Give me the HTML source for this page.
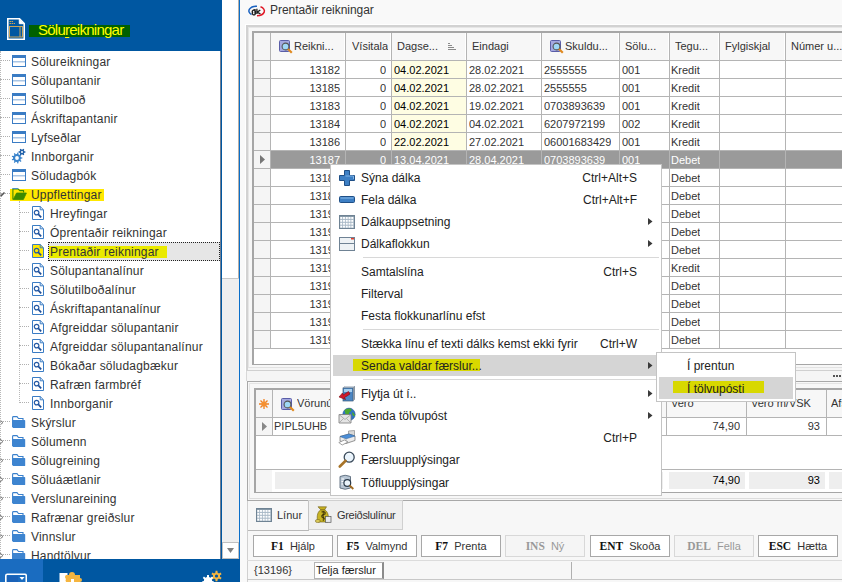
<!DOCTYPE html><html><head><meta charset="utf-8"><style>
*{margin:0;padding:0;box-sizing:border-box}
html,body{width:842px;height:582px;overflow:hidden;background:#f9f9f9;font-family:"Liberation Sans",sans-serif}
body{position:relative}
.a{position:absolute}
.t{position:absolute;white-space:nowrap}
#hdr{left:0;top:0;width:222px;height:51px;background:#0057a1}
#tree{left:0;top:51px;width:220px;height:508px;background:#fff;overflow:hidden}
#tblue{left:220px;top:51px;width:2px;height:508px;background:#0057a1;border-left:1px solid #6f7f94}
#sb{left:222px;top:0;width:17px;height:559px;background:#fff;border-right:1px solid #b8b0a8}
#vline{left:239px;top:0;width:1px;height:582px;background:#0b6fc9}
#bot{left:0;top:559px;width:240px;height:23px;background:#0057a1}
.ti{position:absolute;font-size:12px;color:#333;white-space:nowrap;letter-spacing:0.2px;line-height:14px}
.g{position:absolute;font-size:11px;line-height:17px;color:#222;white-space:nowrap;overflow:hidden}
.gh{position:absolute;font-size:11px;line-height:27px;color:#333;white-space:nowrap;overflow:hidden}
.mi{position:absolute;font-size:12px;line-height:22px;color:#222;white-space:nowrap}
</style></head><body><div id="root" style="position:relative;width:842px;height:582px;overflow:hidden">
<div id="hdr" class="a"></div>
<svg class="a" style="left:7px;top:18px" width="18" height="22" viewBox="0 0 18 22">
<path d="M0.8 0.8 H12.5 L17.2 5.5 V21.2 H0.8 Z" fill="#0057a1" stroke="#fff" stroke-width="1.6"/>
<path d="M12.3 1 V5.7 H17" fill="#fff" stroke="#fff" stroke-width="1"/>
<rect x="2.5" y="8.5" width="13" height="10.5" fill="none" stroke="#c9a45a" stroke-width="1"/>
<line x1="13" y1="8.5" x2="13" y2="19" stroke="#c9a45a" stroke-width="1"/>
<path d="M2.5 3.5 H6 M2.5 5.5 H8" stroke="#c9a45a" stroke-width="1" stroke-dasharray="1.5 0.6"/>
</svg>
<div class="a" style="left:29px;top:25px;width:101px;height:12px;background:#006000"></div>
<div class="t" style="left:38px;top:21px;font-size:15px;line-height:18px;color:#ffff00;letter-spacing:-0.75px">Sölu<u style="text-decoration-thickness:1px;text-underline-offset:2px">r</u>eikningar</div>
<div id="tree" class="a">
<div class="a" style="left:0;top:9px;width:10px;height:1px;border-top:1px dotted #b0b0b0"></div>
<svg class="a" style="left:12px;top:4px" width="14" height="12" viewBox="0 0 14 12"><rect x="0.5" y="0.5" width="13" height="11" fill="#fff" stroke="#3a7cc4"/><rect x="0" y="0" width="14" height="3" fill="#3a7cc4"/><rect x="1" y="6" width="12" height="1.5" fill="#a9c6e6"/></svg>
<div class="ti" style="left:31px;top:4px">Sölureikningar</div>
<div class="a" style="left:0;top:28px;width:10px;height:1px;border-top:1px dotted #b0b0b0"></div>
<svg class="a" style="left:12px;top:23px" width="14" height="12" viewBox="0 0 14 12"><rect x="0.5" y="0.5" width="13" height="11" fill="#fff" stroke="#3a7cc4"/><rect x="0" y="0" width="14" height="3" fill="#3a7cc4"/><rect x="1" y="6" width="12" height="1.5" fill="#a9c6e6"/></svg>
<div class="ti" style="left:31px;top:23px">Sölupantanir</div>
<div class="a" style="left:0;top:47px;width:10px;height:1px;border-top:1px dotted #b0b0b0"></div>
<svg class="a" style="left:12px;top:42px" width="14" height="12" viewBox="0 0 14 12"><rect x="0.5" y="0.5" width="13" height="11" fill="#fff" stroke="#3a7cc4"/><rect x="0" y="0" width="14" height="3" fill="#3a7cc4"/><rect x="1" y="6" width="12" height="1.5" fill="#a9c6e6"/></svg>
<div class="ti" style="left:31px;top:42px">Sölutilboð</div>
<div class="a" style="left:0;top:66px;width:10px;height:1px;border-top:1px dotted #b0b0b0"></div>
<svg class="a" style="left:12px;top:61px" width="14" height="12" viewBox="0 0 14 12"><rect x="0.5" y="0.5" width="13" height="11" fill="#fff" stroke="#3a7cc4"/><rect x="0" y="0" width="14" height="3" fill="#3a7cc4"/><rect x="1" y="6" width="12" height="1.5" fill="#a9c6e6"/></svg>
<div class="ti" style="left:31px;top:61px">Áskriftapantanir</div>
<div class="a" style="left:0;top:85px;width:10px;height:1px;border-top:1px dotted #b0b0b0"></div>
<svg class="a" style="left:12px;top:80px" width="14" height="12" viewBox="0 0 14 12"><rect x="0.5" y="0.5" width="13" height="11" fill="#fff" stroke="#3a7cc4"/><rect x="0" y="0" width="14" height="3" fill="#3a7cc4"/><rect x="1" y="6" width="12" height="1.5" fill="#a9c6e6"/></svg>
<div class="ti" style="left:31px;top:80px">Lyfseðlar</div>
<div class="a" style="left:0;top:104px;width:10px;height:1px;border-top:1px dotted #b0b0b0"></div>
<svg class="a" style="left:11px;top:96px" width="17" height="17" viewBox="0 0 17 17"><path fill-rule="evenodd" d="M9.94 10.31 L11.37 10.44 L11.37 11.56 L9.94 11.69 L9.46 13.00 L10.48 14.02 L9.75 14.88 L8.57 14.06 L7.37 14.76 L7.49 16.19 L6.38 16.39 L6.00 15.00 L4.63 14.76 L3.80 15.93 L2.83 15.37 L3.43 14.06 L2.54 13.00 L1.15 13.37 L0.76 12.31 L2.06 11.69 L2.06 10.31 L0.76 9.69 L1.15 8.63 L2.54 9.00 L3.43 7.94 L2.83 6.63 L3.80 6.07 L4.63 7.24 L6.00 7.00 L6.38 5.61 L7.49 5.81 L7.37 7.24 L8.57 7.94 L9.75 7.12 L10.48 7.98 L9.46 9.00 Z M7.90 11.00 A1.9 1.9 0 1 0 4.10 11.00 A1.9 1.9 0 1 0 7.90 11.00 Z" fill="#3a84cc"/><path fill-rule="evenodd" d="M13.41 4.35 L14.56 4.44 L14.56 5.56 L13.41 5.65 L12.77 6.77 L13.27 7.80 L12.29 8.36 L11.65 7.41 L10.35 7.41 L9.71 8.36 L8.73 7.80 L9.23 6.77 L8.59 5.65 L7.44 5.56 L7.44 4.44 L8.59 4.35 L9.23 3.23 L8.73 2.20 L9.71 1.64 L10.35 2.59 L11.65 2.59 L12.29 1.64 L13.27 2.20 L12.77 3.23 Z M12.00 5.00 A1.0 1.0 0 1 0 10.00 5.00 A1.0 1.0 0 1 0 12.00 5.00 Z" fill="#1f5fa8"/></svg>
<div class="ti" style="left:31px;top:99px">Innborganir</div>
<div class="a" style="left:0;top:123px;width:10px;height:1px;border-top:1px dotted #b0b0b0"></div>
<svg class="a" style="left:12px;top:118px" width="14" height="12" viewBox="0 0 14 12"><rect x="0.5" y="0.5" width="13" height="11" fill="#fff" stroke="#3a7cc4"/><rect x="0" y="0" width="14" height="3" fill="#3a7cc4"/><rect x="1" y="6" width="12" height="1.5" fill="#a9c6e6"/></svg>
<div class="ti" style="left:31px;top:118px">Söludagbók</div>
<div class="a" style="left:0;top:142px;width:10px;height:1px;border-top:1px dotted #b0b0b0"></div>
<div class="a" style="left:10px;top:138px;width:94px;height:12px;background:#ffe800"></div>
<svg class="a" style="left:0;top:140px" width="6" height="7"><path d="M0.5 5.5 L4.5 1.5" stroke="#555" stroke-width="1.6"/></svg>
<svg class="a" style="left:10px;top:137px" width="18" height="14" viewBox="0 0 18 14"><path d="M2.9 11.5 V0.9 H8 L9.8 2.6 H13.6 V4.5" fill="none" stroke="#3a8a00" stroke-width="1.1" stroke-linejoin="round"/><path d="M2.5 0.6 H8" stroke="#4a90d0" stroke-width="1"/><path d="M3.2 11.5 L6.6 5 H16.4 L13.4 11.5 Z" fill="#3d8a00" stroke="#3d8a00" stroke-width="0.8" stroke-linejoin="round"/></svg>
<div class="ti" style="left:31px;top:137px">Uppflettingar</div>
<div class="a" style="left:19px;top:161px;width:10px;height:1px;border-top:1px dotted #b0b0b0"></div>
<svg class="a" style="left:32px;top:155px" width="12" height="14" viewBox="0 0 12 14"><path d="M0.5 0.5 H8.2 L11.5 3.8 V13.5 H0.5 Z" fill="#fff" stroke="#3a7cc4"/><path d="M8.2 0.5 V3.8 H11.5" fill="none" stroke="#3a7cc4"/><circle cx="4.6" cy="6.6" r="2.3" fill="none" stroke="#2358a4" stroke-width="1.2"/><path d="M6.3 8.4 L9.2 11.3" stroke="#1f4f98" stroke-width="1.7"/></svg>
<div class="ti" style="left:50px;top:156px">Hreyfingar</div>
<div class="a" style="left:19px;top:180px;width:10px;height:1px;border-top:1px dotted #b0b0b0"></div>
<svg class="a" style="left:32px;top:174px" width="12" height="14" viewBox="0 0 12 14"><path d="M0.5 0.5 H8.2 L11.5 3.8 V13.5 H0.5 Z" fill="#fff" stroke="#3a7cc4"/><path d="M8.2 0.5 V3.8 H11.5" fill="none" stroke="#3a7cc4"/><circle cx="4.6" cy="6.6" r="2.3" fill="none" stroke="#2358a4" stroke-width="1.2"/><path d="M6.3 8.4 L9.2 11.3" stroke="#1f4f98" stroke-width="1.7"/></svg>
<div class="ti" style="left:50px;top:175px">Óprentaðir reikningar</div>
<div class="a" style="left:19px;top:199px;width:10px;height:1px;border-top:1px dotted #b0b0b0"></div>
<div class="a" style="left:48px;top:191px;width:172px;height:19px;background:#e6e6e6;border:1px dotted #222"></div>
<div class="a" style="left:49px;top:195px;width:118px;height:12px;background:#eaea00"></div>
<svg class="a" style="left:32px;top:193px" width="12" height="14" viewBox="0 0 12 14"><path d="M0.5 0.5 H8.2 L11.5 3.8 V13.5 H0.5 Z" fill="#ffe800" stroke="#3a7cc4"/><path d="M8.2 0.5 V3.8 H11.5" fill="none" stroke="#3a7cc4"/><circle cx="4.6" cy="6.6" r="2.3" fill="none" stroke="#2358a4" stroke-width="1.2"/><path d="M6.3 8.4 L9.2 11.3" stroke="#1f4f98" stroke-width="1.7"/></svg>
<div class="ti" style="left:50px;top:194px">Prentaðir reikningar</div>
<div class="a" style="left:19px;top:218px;width:10px;height:1px;border-top:1px dotted #b0b0b0"></div>
<svg class="a" style="left:32px;top:212px" width="12" height="14" viewBox="0 0 12 14"><path d="M0.5 0.5 H8.2 L11.5 3.8 V13.5 H0.5 Z" fill="#fff" stroke="#3a7cc4"/><path d="M8.2 0.5 V3.8 H11.5" fill="none" stroke="#3a7cc4"/><circle cx="4.6" cy="6.6" r="2.3" fill="none" stroke="#2358a4" stroke-width="1.2"/><path d="M6.3 8.4 L9.2 11.3" stroke="#1f4f98" stroke-width="1.7"/></svg>
<div class="ti" style="left:50px;top:213px">Sölupantanalínur</div>
<div class="a" style="left:19px;top:237px;width:10px;height:1px;border-top:1px dotted #b0b0b0"></div>
<svg class="a" style="left:32px;top:231px" width="12" height="14" viewBox="0 0 12 14"><path d="M0.5 0.5 H8.2 L11.5 3.8 V13.5 H0.5 Z" fill="#fff" stroke="#3a7cc4"/><path d="M8.2 0.5 V3.8 H11.5" fill="none" stroke="#3a7cc4"/><circle cx="4.6" cy="6.6" r="2.3" fill="none" stroke="#2358a4" stroke-width="1.2"/><path d="M6.3 8.4 L9.2 11.3" stroke="#1f4f98" stroke-width="1.7"/></svg>
<div class="ti" style="left:50px;top:232px">Sölutilboðalínur</div>
<div class="a" style="left:19px;top:256px;width:10px;height:1px;border-top:1px dotted #b0b0b0"></div>
<svg class="a" style="left:32px;top:250px" width="12" height="14" viewBox="0 0 12 14"><path d="M0.5 0.5 H8.2 L11.5 3.8 V13.5 H0.5 Z" fill="#fff" stroke="#3a7cc4"/><path d="M8.2 0.5 V3.8 H11.5" fill="none" stroke="#3a7cc4"/><circle cx="4.6" cy="6.6" r="2.3" fill="none" stroke="#2358a4" stroke-width="1.2"/><path d="M6.3 8.4 L9.2 11.3" stroke="#1f4f98" stroke-width="1.7"/></svg>
<div class="ti" style="left:50px;top:251px">Áskriftapantanalínur</div>
<div class="a" style="left:19px;top:275px;width:10px;height:1px;border-top:1px dotted #b0b0b0"></div>
<svg class="a" style="left:32px;top:269px" width="12" height="14" viewBox="0 0 12 14"><path d="M0.5 0.5 H8.2 L11.5 3.8 V13.5 H0.5 Z" fill="#fff" stroke="#3a7cc4"/><path d="M8.2 0.5 V3.8 H11.5" fill="none" stroke="#3a7cc4"/><circle cx="4.6" cy="6.6" r="2.3" fill="none" stroke="#2358a4" stroke-width="1.2"/><path d="M6.3 8.4 L9.2 11.3" stroke="#1f4f98" stroke-width="1.7"/></svg>
<div class="ti" style="left:50px;top:270px">Afgreiddar sölupantanir</div>
<div class="a" style="left:19px;top:294px;width:10px;height:1px;border-top:1px dotted #b0b0b0"></div>
<svg class="a" style="left:32px;top:288px" width="12" height="14" viewBox="0 0 12 14"><path d="M0.5 0.5 H8.2 L11.5 3.8 V13.5 H0.5 Z" fill="#fff" stroke="#3a7cc4"/><path d="M8.2 0.5 V3.8 H11.5" fill="none" stroke="#3a7cc4"/><circle cx="4.6" cy="6.6" r="2.3" fill="none" stroke="#2358a4" stroke-width="1.2"/><path d="M6.3 8.4 L9.2 11.3" stroke="#1f4f98" stroke-width="1.7"/></svg>
<div class="ti" style="left:50px;top:289px">Afgreiddar sölupantanalínur</div>
<div class="a" style="left:19px;top:313px;width:10px;height:1px;border-top:1px dotted #b0b0b0"></div>
<svg class="a" style="left:32px;top:307px" width="12" height="14" viewBox="0 0 12 14"><path d="M0.5 0.5 H8.2 L11.5 3.8 V13.5 H0.5 Z" fill="#fff" stroke="#3a7cc4"/><path d="M8.2 0.5 V3.8 H11.5" fill="none" stroke="#3a7cc4"/><circle cx="4.6" cy="6.6" r="2.3" fill="none" stroke="#2358a4" stroke-width="1.2"/><path d="M6.3 8.4 L9.2 11.3" stroke="#1f4f98" stroke-width="1.7"/></svg>
<div class="ti" style="left:50px;top:308px">Bókaðar söludagbækur</div>
<div class="a" style="left:19px;top:332px;width:10px;height:1px;border-top:1px dotted #b0b0b0"></div>
<svg class="a" style="left:32px;top:326px" width="12" height="14" viewBox="0 0 12 14"><path d="M0.5 0.5 H8.2 L11.5 3.8 V13.5 H0.5 Z" fill="#fff" stroke="#3a7cc4"/><path d="M8.2 0.5 V3.8 H11.5" fill="none" stroke="#3a7cc4"/><circle cx="4.6" cy="6.6" r="2.3" fill="none" stroke="#2358a4" stroke-width="1.2"/><path d="M6.3 8.4 L9.2 11.3" stroke="#1f4f98" stroke-width="1.7"/></svg>
<div class="ti" style="left:50px;top:327px">Rafræn farmbréf</div>
<div class="a" style="left:19px;top:351px;width:10px;height:1px;border-top:1px dotted #b0b0b0"></div>
<svg class="a" style="left:32px;top:345px" width="12" height="14" viewBox="0 0 12 14"><path d="M0.5 0.5 H8.2 L11.5 3.8 V13.5 H0.5 Z" fill="#fff" stroke="#3a7cc4"/><path d="M8.2 0.5 V3.8 H11.5" fill="none" stroke="#3a7cc4"/><circle cx="4.6" cy="6.6" r="2.3" fill="none" stroke="#2358a4" stroke-width="1.2"/><path d="M6.3 8.4 L9.2 11.3" stroke="#1f4f98" stroke-width="1.7"/></svg>
<div class="ti" style="left:50px;top:346px">Innborganir</div>
<div class="a" style="left:0;top:370px;width:10px;height:1px;border-top:1px dotted #b0b0b0"></div>
<svg class="a" style="left:0;top:368px" width="4" height="7"><path d="M0 1 L3 3.5 L0 6" fill="none" stroke="#777" stroke-width="1"/></svg>
<svg class="a" style="left:12px;top:365px" width="14" height="13" viewBox="0 0 14 13"><path d="M0.6 11 V1.5 Q0.6 0.6 1.5 0.6 H5 L6.5 2.5 H11 V4" fill="#fff" stroke="#3a80cc" stroke-width="1.1"/><path d="M0.5 4 H12.5 Q13.2 4 13.2 4.8 V11.4 Q13.2 12 12.5 12 H1.2 Q0.5 12 0.5 11.3 Z" fill="#3d84d0"/></svg>
<div class="ti" style="left:31px;top:365px">Skýrslur</div>
<div class="a" style="left:0;top:389px;width:10px;height:1px;border-top:1px dotted #b0b0b0"></div>
<svg class="a" style="left:0;top:387px" width="4" height="7"><path d="M0 1 L3 3.5 L0 6" fill="none" stroke="#777" stroke-width="1"/></svg>
<svg class="a" style="left:12px;top:384px" width="14" height="13" viewBox="0 0 14 13"><path d="M0.6 11 V1.5 Q0.6 0.6 1.5 0.6 H5 L6.5 2.5 H11 V4" fill="#fff" stroke="#3a80cc" stroke-width="1.1"/><path d="M0.5 4 H12.5 Q13.2 4 13.2 4.8 V11.4 Q13.2 12 12.5 12 H1.2 Q0.5 12 0.5 11.3 Z" fill="#3d84d0"/></svg>
<div class="ti" style="left:31px;top:384px">Sölumenn</div>
<div class="a" style="left:0;top:408px;width:10px;height:1px;border-top:1px dotted #b0b0b0"></div>
<svg class="a" style="left:0;top:406px" width="4" height="7"><path d="M0 1 L3 3.5 L0 6" fill="none" stroke="#777" stroke-width="1"/></svg>
<svg class="a" style="left:12px;top:403px" width="14" height="13" viewBox="0 0 14 13"><path d="M0.6 11 V1.5 Q0.6 0.6 1.5 0.6 H5 L6.5 2.5 H11 V4" fill="#fff" stroke="#3a80cc" stroke-width="1.1"/><path d="M0.5 4 H12.5 Q13.2 4 13.2 4.8 V11.4 Q13.2 12 12.5 12 H1.2 Q0.5 12 0.5 11.3 Z" fill="#3d84d0"/></svg>
<div class="ti" style="left:31px;top:403px">Sölugreining</div>
<div class="a" style="left:0;top:427px;width:10px;height:1px;border-top:1px dotted #b0b0b0"></div>
<svg class="a" style="left:0;top:425px" width="4" height="7"><path d="M0 1 L3 3.5 L0 6" fill="none" stroke="#777" stroke-width="1"/></svg>
<svg class="a" style="left:12px;top:422px" width="14" height="13" viewBox="0 0 14 13"><path d="M0.6 11 V1.5 Q0.6 0.6 1.5 0.6 H5 L6.5 2.5 H11 V4" fill="#fff" stroke="#3a80cc" stroke-width="1.1"/><path d="M0.5 4 H12.5 Q13.2 4 13.2 4.8 V11.4 Q13.2 12 12.5 12 H1.2 Q0.5 12 0.5 11.3 Z" fill="#3d84d0"/></svg>
<div class="ti" style="left:31px;top:422px">Söluáætlanir</div>
<div class="a" style="left:0;top:446px;width:10px;height:1px;border-top:1px dotted #b0b0b0"></div>
<svg class="a" style="left:0;top:444px" width="4" height="7"><path d="M0 1 L3 3.5 L0 6" fill="none" stroke="#777" stroke-width="1"/></svg>
<svg class="a" style="left:12px;top:441px" width="14" height="13" viewBox="0 0 14 13"><path d="M0.6 11 V1.5 Q0.6 0.6 1.5 0.6 H5 L6.5 2.5 H11 V4" fill="#fff" stroke="#3a80cc" stroke-width="1.1"/><path d="M0.5 4 H12.5 Q13.2 4 13.2 4.8 V11.4 Q13.2 12 12.5 12 H1.2 Q0.5 12 0.5 11.3 Z" fill="#3d84d0"/></svg>
<div class="ti" style="left:31px;top:441px">Verslunareining</div>
<div class="a" style="left:0;top:465px;width:10px;height:1px;border-top:1px dotted #b0b0b0"></div>
<svg class="a" style="left:0;top:463px" width="4" height="7"><path d="M0 1 L3 3.5 L0 6" fill="none" stroke="#777" stroke-width="1"/></svg>
<svg class="a" style="left:12px;top:460px" width="14" height="13" viewBox="0 0 14 13"><path d="M0.6 11 V1.5 Q0.6 0.6 1.5 0.6 H5 L6.5 2.5 H11 V4" fill="#fff" stroke="#3a80cc" stroke-width="1.1"/><path d="M0.5 4 H12.5 Q13.2 4 13.2 4.8 V11.4 Q13.2 12 12.5 12 H1.2 Q0.5 12 0.5 11.3 Z" fill="#3d84d0"/></svg>
<div class="ti" style="left:31px;top:460px">Rafrænar greiðslur</div>
<div class="a" style="left:0;top:484px;width:10px;height:1px;border-top:1px dotted #b0b0b0"></div>
<svg class="a" style="left:0;top:482px" width="4" height="7"><path d="M0 1 L3 3.5 L0 6" fill="none" stroke="#777" stroke-width="1"/></svg>
<svg class="a" style="left:12px;top:479px" width="14" height="13" viewBox="0 0 14 13"><path d="M0.6 11 V1.5 Q0.6 0.6 1.5 0.6 H5 L6.5 2.5 H11 V4" fill="#fff" stroke="#3a80cc" stroke-width="1.1"/><path d="M0.5 4 H12.5 Q13.2 4 13.2 4.8 V11.4 Q13.2 12 12.5 12 H1.2 Q0.5 12 0.5 11.3 Z" fill="#3d84d0"/></svg>
<div class="ti" style="left:31px;top:479px">Vinnslur</div>
<div class="a" style="left:0;top:503px;width:10px;height:1px;border-top:1px dotted #b0b0b0"></div>
<svg class="a" style="left:0;top:501px" width="4" height="7"><path d="M0 1 L3 3.5 L0 6" fill="none" stroke="#777" stroke-width="1"/></svg>
<svg class="a" style="left:12px;top:498px" width="14" height="13" viewBox="0 0 14 13"><path d="M0.6 11 V1.5 Q0.6 0.6 1.5 0.6 H5 L6.5 2.5 H11 V4" fill="#fff" stroke="#3a80cc" stroke-width="1.1"/><path d="M0.5 4 H12.5 Q13.2 4 13.2 4.8 V11.4 Q13.2 12 12.5 12 H1.2 Q0.5 12 0.5 11.3 Z" fill="#3d84d0"/></svg>
<div class="ti" style="left:31px;top:498px">Handtölvur</div>
<div class="a" style="left:0;top:0;width:1px;height:508px;border-left:1px dotted #b8b8b8"></div>
<div class="a" style="left:19px;top:150px;width:1px;height:202px;border-left:1px dotted #b8b8b8"></div>
</div>
<div id="tblue" class="a"></div>
<div id="sb" class="a"></div>
<div class="a" style="left:222px;top:278px;width:17px;height:264px;background:#efefef;border-top:1px solid #c8c8c8"></div>
<div class="a" style="left:222px;top:542px;width:17px;height:17px;background:#fff;border:1px solid #c0c0c0"></div>
<svg class="a" style="left:227px;top:548px" width="7" height="5"><path d="M0 0 H7 L3.5 5 Z" fill="#808080"/></svg>
<div id="vline" class="a"></div>
<div id="bot" class="a"></div>
<div class="a" style="left:0;top:559px;width:43px;height:23px;background:#1a6cc0"></div>
<svg class="a" style="left:5px;top:573px" width="22" height="9"><rect x="0.8" y="1.3" width="20.5" height="9" rx="1.5" fill="none" stroke="#fff" stroke-width="1.6"/><rect x="2" y="3" width="11" height="7" fill="#1a62b8"/><path d="M14.5 4 H19.5 L17 7 Z" fill="#fff"/></svg>
<svg class="a" style="left:59px;top:572px" width="23" height="10" viewBox="0 0 23 10"><rect x="0.5" y="1" width="8" height="9" fill="#fff"/><path d="M7 3 H10 Q10 0 13 0 Q16 0 16 3 H21 V6 Q23 6 23 8 Q23 10 21 10 H7 Q6 8 7 7 Q5 5 7 3 Z" fill="#f5b540"/><rect x="12" y="7" width="3" height="3" fill="#fff"/></svg>
<svg class="a" style="left:200px;top:570px" width="23" height="12" viewBox="0 0 23 12"><path fill-rule="evenodd" d="M15.48 2.55 L15.52 0.69 L17.48 0.69 L17.52 2.55 L18.98 3.39 L20.61 2.49 L21.59 4.20 L20.00 5.16 L20.00 6.84 L21.59 7.80 L20.61 9.51 L18.98 8.61 L17.52 9.45 L17.48 11.31 L15.52 11.31 L15.48 9.45 L14.02 8.61 L12.39 9.51 L11.41 7.80 L13.00 6.84 L13.00 5.16 L11.41 4.20 L12.39 2.49 L14.02 3.39 Z M18.10 6.00 A1.6 1.6 0 1 0 14.90 6.00 A1.6 1.6 0 1 0 18.10 6.00 Z" fill="#f5b540"/><path d="M6.97 6.93 L7.06 5.07 L8.94 5.07 L9.03 6.93 L10.54 7.66 L12.05 6.57 L13.22 8.04 L11.82 9.26 L12.20 10.91 L13.99 11.40 L13.57 13.23 L11.74 12.91 L10.69 14.22 L11.42 15.93 L9.73 16.75 L8.84 15.11 L7.16 15.11 L6.27 16.75 L4.58 15.93 L5.31 14.22 L4.26 12.91 L2.43 13.23 L2.01 11.40 L3.80 10.91 L4.18 9.26 L2.78 8.04 L3.95 6.57 L5.46 7.66 Z" fill="#fff"/></svg>
<svg class="a" style="left:248px;top:5px" width="18" height="12" viewBox="0 0 18 12">
<path d="M9 1.2 A7.6 4.8 0 0 0 3.5 9.6" fill="none" stroke="#1a62c0" stroke-width="1.5"/>
<path d="M12.5 1.8 A7.6 4.8 0 0 1 9 10.8" fill="none" stroke="#e01a28" stroke-width="1.5"/>
<path d="M4.6 7.4 A1.6 1.5 0 1 0 7.2 7.4 A1.6 1.5 0 1 0 4.6 7.4 Z M7 4 V8.8" fill="none" stroke="#1e1e1e" stroke-width="1.3"/>
<path d="M8.9 3.8 V8.9 M12.3 5 L9.2 7.2 L12.4 8.9" fill="none" stroke="#1e1e1e" stroke-width="1.3"/>
</svg>
<div class="t" style="left:270px;top:3px;font-size:12px;line-height:14px;color:#333;letter-spacing:-0.05px">Prentaðir reikningar</div>
<div class="a" style="left:245px;top:24px;width:600px;height:348px;border-left:1px solid #fff;border-top:1px solid #fff"></div>
<div class="a" style="left:246px;top:25px;width:600px;height:346px;border-left:2px solid #d2d2d2;border-top:2px solid #d2d2d2;border-bottom:1px solid #d0d0d0;background:#f5f5f5"></div>
<div class="a" style="left:248px;top:27px;width:600px;height:341px;border-left:1px solid #e6e6e6;border-top:1px solid #e6e6e6;border-bottom:1px solid #e2e2e2;background:#f7f7f7"></div>
<div class="a" style="left:252px;top:31px;width:600px;height:334px;border-left:2px solid #a6a6a6;border-top:2px solid #a6a6a6;border-bottom:1px solid #a6a6a6;background:#fff"></div>
<div class="a" style="left:254px;top:33px;width:600px;height:27px;background:#f7f7f7"></div>
<div class="a" style="left:254px;top:33px;width:16px;height:315px;background:#f5f5f5"></div>
<div class="a" style="left:392px;top:61px;width:74px;height:287px;background:#fefde3"></div>
<div class="a" style="left:271px;top:151px;width:600px;height:17px;background:#9a9a9a"></div>
<svg class="a" style="left:260px;top:155px" width="5" height="9"><path d="M0 0 L5 4.5 L0 9 Z" fill="#777"/></svg>
<div class="a" style="left:270px;top:33px;width:1px;height:315px;background:#b4b4b4"></div>
<div class="a" style="left:345px;top:33px;width:1px;height:315px;background:#b4b4b4"></div>
<div class="a" style="left:391px;top:33px;width:1px;height:315px;background:#b4b4b4"></div>
<div class="a" style="left:466px;top:33px;width:1px;height:315px;background:#b4b4b4"></div>
<div class="a" style="left:541px;top:33px;width:1px;height:315px;background:#b4b4b4"></div>
<div class="a" style="left:619px;top:33px;width:1px;height:315px;background:#b4b4b4"></div>
<div class="a" style="left:669px;top:33px;width:1px;height:315px;background:#b4b4b4"></div>
<div class="a" style="left:719px;top:33px;width:1px;height:315px;background:#b4b4b4"></div>
<div class="a" style="left:785px;top:33px;width:1px;height:315px;background:#b4b4b4"></div>
<div class="a" style="left:344px;top:33px;width:1px;height:27px;background:#fff"></div>
<div class="a" style="left:390px;top:33px;width:1px;height:27px;background:#fff"></div>
<div class="a" style="left:465px;top:33px;width:1px;height:27px;background:#fff"></div>
<div class="a" style="left:540px;top:33px;width:1px;height:27px;background:#fff"></div>
<div class="a" style="left:618px;top:33px;width:1px;height:27px;background:#fff"></div>
<div class="a" style="left:668px;top:33px;width:1px;height:27px;background:#fff"></div>
<div class="a" style="left:718px;top:33px;width:1px;height:27px;background:#fff"></div>
<div class="a" style="left:784px;top:33px;width:1px;height:27px;background:#fff"></div>
<div class="a" style="left:254px;top:60px;width:600px;height:1px;background:#b4b4b4"></div>
<div class="a" style="left:254px;top:78px;width:600px;height:1px;background:#b4b4b4"></div>
<div class="a" style="left:254px;top:96px;width:600px;height:1px;background:#b4b4b4"></div>
<div class="a" style="left:254px;top:114px;width:600px;height:1px;background:#b4b4b4"></div>
<div class="a" style="left:254px;top:132px;width:600px;height:1px;background:#b4b4b4"></div>
<div class="a" style="left:254px;top:150px;width:600px;height:1px;background:#b4b4b4"></div>
<div class="a" style="left:254px;top:168px;width:600px;height:1px;background:#b4b4b4"></div>
<div class="a" style="left:254px;top:186px;width:600px;height:1px;background:#b4b4b4"></div>
<div class="a" style="left:254px;top:204px;width:600px;height:1px;background:#b4b4b4"></div>
<div class="a" style="left:254px;top:222px;width:600px;height:1px;background:#b4b4b4"></div>
<div class="a" style="left:254px;top:240px;width:600px;height:1px;background:#b4b4b4"></div>
<div class="a" style="left:254px;top:258px;width:600px;height:1px;background:#b4b4b4"></div>
<div class="a" style="left:254px;top:276px;width:600px;height:1px;background:#b4b4b4"></div>
<div class="a" style="left:254px;top:294px;width:600px;height:1px;background:#b4b4b4"></div>
<div class="a" style="left:254px;top:312px;width:600px;height:1px;background:#b4b4b4"></div>
<div class="a" style="left:254px;top:330px;width:600px;height:1px;background:#b4b4b4"></div>
<div class="a" style="left:254px;top:348px;width:600px;height:1px;background:#b4b4b4"></div>
<div class="gh" style="left:294px;top:33px">Reikni...</div>
<div class="gh" style="left:352px;top:33px">Vísitala</div>
<div class="gh" style="left:397px;top:33px">Dagse...</div>
<div class="gh" style="left:472px;top:33px">Eindagi</div>
<div class="gh" style="left:565px;top:33px">Skuldu...</div>
<div class="gh" style="left:625px;top:33px">Sölu...</div>
<div class="gh" style="left:675px;top:33px">Tegu...</div>
<div class="gh" style="left:725px;top:33px">Fylgiskjal</div>
<div class="gh" style="left:791px;top:33px">Númer u...</div>
<svg class="a" style="left:279px;top:40px" width="14" height="14" viewBox="0 0 14 14"><rect x="0.5" y="0.5" width="10" height="11" rx="1" fill="#a4a8e0" stroke="#5a5ea8"/><circle cx="6.5" cy="6.5" r="3.4" fill="#9fd8f6" stroke="#555" stroke-width="1.1"/><path d="M9 9 L12.8 12.8" stroke="#e08a20" stroke-width="2.2"/></svg>
<svg class="a" style="left:550px;top:40px" width="14" height="14" viewBox="0 0 14 14"><rect x="0.5" y="0.5" width="10" height="11" rx="1" fill="#a4a8e0" stroke="#5a5ea8"/><circle cx="6.5" cy="6.5" r="3.4" fill="#9fd8f6" stroke="#555" stroke-width="1.1"/><path d="M9 9 L12.8 12.8" stroke="#e08a20" stroke-width="2.2"/></svg>
<svg class="a" style="left:448px;top:43px" width="9" height="8"><path d="M0 0.5 H2 M0 2.5 H4 M0 4.5 H6 M0 6.5 H8" stroke="#8a8a8a" stroke-width="1"/></svg>
<div class="g" style="left:271px;top:62px;width:69px;text-align:right;color:#333">13182</div>
<div class="g" style="left:346px;top:62px;width:40px;text-align:right;color:#333">0</div>
<div class="g" style="left:394px;top:62px;color:#000">04.02.2021</div>
<div class="g" style="left:469px;top:62px;color:#333">28.02.2021</div>
<div class="g" style="left:544px;top:62px;color:#333">2555555</div>
<div class="g" style="left:622px;top:62px;color:#333">001</div>
<div class="g" style="left:671px;top:62px;color:#333">Kredit</div>
<div class="g" style="left:271px;top:80px;width:69px;text-align:right;color:#333">13185</div>
<div class="g" style="left:346px;top:80px;width:40px;text-align:right;color:#333">0</div>
<div class="g" style="left:394px;top:80px;color:#000">04.02.2021</div>
<div class="g" style="left:469px;top:80px;color:#333">28.02.2021</div>
<div class="g" style="left:544px;top:80px;color:#333">2555555</div>
<div class="g" style="left:622px;top:80px;color:#333">001</div>
<div class="g" style="left:671px;top:80px;color:#333">Kredit</div>
<div class="g" style="left:271px;top:98px;width:69px;text-align:right;color:#333">13183</div>
<div class="g" style="left:346px;top:98px;width:40px;text-align:right;color:#333">0</div>
<div class="g" style="left:394px;top:98px;color:#000">04.02.2021</div>
<div class="g" style="left:469px;top:98px;color:#333">19.02.2021</div>
<div class="g" style="left:544px;top:98px;color:#333">0703893639</div>
<div class="g" style="left:622px;top:98px;color:#333">001</div>
<div class="g" style="left:671px;top:98px;color:#333">Kredit</div>
<div class="g" style="left:271px;top:116px;width:69px;text-align:right;color:#333">13184</div>
<div class="g" style="left:346px;top:116px;width:40px;text-align:right;color:#333">0</div>
<div class="g" style="left:394px;top:116px;color:#000">04.02.2021</div>
<div class="g" style="left:469px;top:116px;color:#333">04.02.2021</div>
<div class="g" style="left:544px;top:116px;color:#333">6207972199</div>
<div class="g" style="left:622px;top:116px;color:#333">002</div>
<div class="g" style="left:671px;top:116px;color:#333">Kredit</div>
<div class="g" style="left:271px;top:134px;width:69px;text-align:right;color:#333">13186</div>
<div class="g" style="left:346px;top:134px;width:40px;text-align:right;color:#333">0</div>
<div class="g" style="left:394px;top:134px;color:#000">22.02.2021</div>
<div class="g" style="left:469px;top:134px;color:#333">27.02.2021</div>
<div class="g" style="left:544px;top:134px;color:#333">06001683429</div>
<div class="g" style="left:622px;top:134px;color:#333">001</div>
<div class="g" style="left:671px;top:134px;color:#333">Kredit</div>
<div class="g" style="left:271px;top:152px;width:69px;text-align:right;color:#fff">13187</div>
<div class="g" style="left:346px;top:152px;width:40px;text-align:right;color:#fff">0</div>
<div class="g" style="left:394px;top:152px;color:#fff">13.04.2021</div>
<div class="g" style="left:469px;top:152px;color:#fff">28.04.2021</div>
<div class="g" style="left:544px;top:152px;color:#fff">0703893639</div>
<div class="g" style="left:622px;top:152px;color:#fff">001</div>
<div class="g" style="left:671px;top:152px;color:#fff">Debet</div>
<div class="g" style="left:271px;top:170px;width:69px;text-align:right;color:#333">13188</div>
<div class="g" style="left:346px;top:170px;width:40px;text-align:right;color:#333">0</div>
<div class="g" style="left:394px;top:170px;color:#000">13.04.2021</div>
<div class="g" style="left:469px;top:170px;color:#333">28.04.2021</div>
<div class="g" style="left:544px;top:170px;color:#333">0703893639</div>
<div class="g" style="left:622px;top:170px;color:#333">001</div>
<div class="g" style="left:671px;top:170px;color:#333">Debet</div>
<div class="g" style="left:271px;top:188px;width:69px;text-align:right;color:#333">13189</div>
<div class="g" style="left:346px;top:188px;width:40px;text-align:right;color:#333">0</div>
<div class="g" style="left:394px;top:188px;color:#000">13.04.2021</div>
<div class="g" style="left:469px;top:188px;color:#333">28.04.2021</div>
<div class="g" style="left:544px;top:188px;color:#333">0703893639</div>
<div class="g" style="left:622px;top:188px;color:#333">001</div>
<div class="g" style="left:671px;top:188px;color:#333">Debet</div>
<div class="g" style="left:271px;top:206px;width:69px;text-align:right;color:#333">13190</div>
<div class="g" style="left:346px;top:206px;width:40px;text-align:right;color:#333">0</div>
<div class="g" style="left:394px;top:206px;color:#000">13.04.2021</div>
<div class="g" style="left:469px;top:206px;color:#333">28.04.2021</div>
<div class="g" style="left:544px;top:206px;color:#333">0703893639</div>
<div class="g" style="left:622px;top:206px;color:#333">001</div>
<div class="g" style="left:671px;top:206px;color:#333">Debet</div>
<div class="g" style="left:271px;top:224px;width:69px;text-align:right;color:#333">13191</div>
<div class="g" style="left:346px;top:224px;width:40px;text-align:right;color:#333">0</div>
<div class="g" style="left:394px;top:224px;color:#000">13.04.2021</div>
<div class="g" style="left:469px;top:224px;color:#333">28.04.2021</div>
<div class="g" style="left:544px;top:224px;color:#333">0703893639</div>
<div class="g" style="left:622px;top:224px;color:#333">001</div>
<div class="g" style="left:671px;top:224px;color:#333">Debet</div>
<div class="g" style="left:271px;top:242px;width:69px;text-align:right;color:#333">13192</div>
<div class="g" style="left:346px;top:242px;width:40px;text-align:right;color:#333">0</div>
<div class="g" style="left:394px;top:242px;color:#000">13.04.2021</div>
<div class="g" style="left:469px;top:242px;color:#333">28.04.2021</div>
<div class="g" style="left:544px;top:242px;color:#333">0703893639</div>
<div class="g" style="left:622px;top:242px;color:#333">001</div>
<div class="g" style="left:671px;top:242px;color:#333">Debet</div>
<div class="g" style="left:271px;top:260px;width:69px;text-align:right;color:#333">13193</div>
<div class="g" style="left:346px;top:260px;width:40px;text-align:right;color:#333">0</div>
<div class="g" style="left:394px;top:260px;color:#000">13.04.2021</div>
<div class="g" style="left:469px;top:260px;color:#333">28.04.2021</div>
<div class="g" style="left:544px;top:260px;color:#333">0703893639</div>
<div class="g" style="left:622px;top:260px;color:#333">001</div>
<div class="g" style="left:671px;top:260px;color:#333">Kredit</div>
<div class="g" style="left:271px;top:278px;width:69px;text-align:right;color:#333">13194</div>
<div class="g" style="left:346px;top:278px;width:40px;text-align:right;color:#333">0</div>
<div class="g" style="left:394px;top:278px;color:#000">13.04.2021</div>
<div class="g" style="left:469px;top:278px;color:#333">28.04.2021</div>
<div class="g" style="left:544px;top:278px;color:#333">0703893639</div>
<div class="g" style="left:622px;top:278px;color:#333">001</div>
<div class="g" style="left:671px;top:278px;color:#333">Debet</div>
<div class="g" style="left:271px;top:296px;width:69px;text-align:right;color:#333">13195</div>
<div class="g" style="left:346px;top:296px;width:40px;text-align:right;color:#333">0</div>
<div class="g" style="left:394px;top:296px;color:#000">13.04.2021</div>
<div class="g" style="left:469px;top:296px;color:#333">28.04.2021</div>
<div class="g" style="left:544px;top:296px;color:#333">0703893639</div>
<div class="g" style="left:622px;top:296px;color:#333">001</div>
<div class="g" style="left:671px;top:296px;color:#333">Debet</div>
<div class="g" style="left:271px;top:314px;width:69px;text-align:right;color:#333">13196</div>
<div class="g" style="left:346px;top:314px;width:40px;text-align:right;color:#333">0</div>
<div class="g" style="left:394px;top:314px;color:#000">13.04.2021</div>
<div class="g" style="left:469px;top:314px;color:#333">28.04.2021</div>
<div class="g" style="left:544px;top:314px;color:#333">0703893639</div>
<div class="g" style="left:622px;top:314px;color:#333">001</div>
<div class="g" style="left:671px;top:314px;color:#333">Debet</div>
<div class="g" style="left:271px;top:332px;width:69px;text-align:right;color:#333">13197</div>
<div class="g" style="left:346px;top:332px;width:40px;text-align:right;color:#333">0</div>
<div class="g" style="left:394px;top:332px;color:#000">13.04.2021</div>
<div class="g" style="left:469px;top:332px;color:#333">28.04.2021</div>
<div class="g" style="left:544px;top:332px;color:#333">0703893639</div>
<div class="g" style="left:622px;top:332px;color:#333">001</div>
<div class="g" style="left:671px;top:332px;color:#333">Debet</div>
<div class="a" style="left:246px;top:371px;width:600px;height:10px;background:#f5f5f5;border-left:1px solid #d8d8d8"></div>
<div class="a" style="left:833px;top:375px;width:2px;height:2px;background:#555"></div><div class="a" style="left:836px;top:375px;width:2px;height:2px;background:#555"></div><div class="a" style="left:839px;top:375px;width:2px;height:2px;background:#555"></div>
<div class="a" style="left:247px;top:381px;width:600px;height:120px;border-left:1px solid #a8a8a8;border-top:1px solid #a8a8a8;border-bottom:1px solid #a8a8a8;background:#f7f7f7"></div>
<div class="a" style="left:249px;top:383px;width:600px;height:116px;border-left:1px solid #e4e4e4;border-top:1px solid #e4e4e4;border-bottom:1px solid #dcdcdc"></div>
<div class="a" style="left:254px;top:388px;width:600px;height:105px;border-left:2px solid #a6a6a6;border-top:2px solid #a6a6a6;border-bottom:1px solid #a6a6a6;background:#fff"></div>
<div class="a" style="left:256px;top:390px;width:600px;height:27px;background:#f7f7f7"></div>
<div class="a" style="left:256px;top:390px;width:16px;height:45px;background:#f5f5f5"></div>
<div class="a" style="left:272px;top:390px;width:1px;height:45px;background:#b4b4b4"></div>
<div class="a" style="left:666px;top:390px;width:1px;height:45px;background:#b4b4b4"></div>
<div class="a" style="left:746px;top:390px;width:1px;height:45px;background:#b4b4b4"></div>
<div class="a" style="left:826px;top:390px;width:1px;height:45px;background:#b4b4b4"></div>
<div class="a" style="left:256px;top:417px;width:600px;height:1px;background:#b4b4b4"></div>
<div class="a" style="left:256px;top:435px;width:600px;height:1px;background:#b4b4b4"></div>
<div class="a" style="left:256px;top:469px;width:600px;height:1px;background:#b4b4b4"></div>
<svg class="a" style="left:259px;top:399px" width="10" height="10" viewBox="0 0 10 10"><g stroke="#f08020" stroke-width="1.3"><path d="M5 0 V10 M0 5 H10 M1.5 1.5 L8.5 8.5 M8.5 1.5 L1.5 8.5"/></g><circle cx="5" cy="5" r="2.6" fill="#f59030"/></svg>
<svg class="a" style="left:281px;top:398px" width="14" height="14" viewBox="0 0 14 14"><rect x="0.5" y="0.5" width="10" height="11" rx="1" fill="#a4a8e0" stroke="#5a5ea8"/><circle cx="6.5" cy="6.5" r="3.4" fill="#9fd8f6" stroke="#555" stroke-width="1.1"/><path d="M9 9 L12.8 12.8" stroke="#e08a20" stroke-width="2.2"/></svg>
<div class="gh" style="left:297px;top:390px">Vörunúmer</div>
<div class="gh" style="left:671px;top:390px">Verð</div>
<div class="gh" style="left:751px;top:390px">Verð m/VSK</div>
<div class="gh" style="left:831px;top:390px">Afsl</div>
<svg class="a" style="left:262px;top:422px" width="5" height="9"><path d="M0 0 L5 4.5 L0 9 Z" fill="#888"/></svg>
<div class="g" style="left:274px;top:418px;color:#333">PIPL5UHB</div>
<div class="g" style="left:667px;top:418px;width:73px;text-align:right;color:#333">74,90</div>
<div class="g" style="left:747px;top:418px;width:73px;text-align:right;color:#333">93</div>
<div class="a" style="left:256px;top:470px;width:600px;height:22px;background:#fff"></div>
<div class="a" style="left:256px;top:470px;width:16px;height:22px;background:#f5f5f5"></div>
<div class="a" style="left:275px;top:472px;width:388px;height:17px;background:#eeeeee"></div>
<div class="a" style="left:669px;top:472px;width:76px;height:17px;background:#eeeeee"></div>
<div class="a" style="left:749px;top:472px;width:76px;height:17px;background:#eeeeee"></div>
<div class="a" style="left:829px;top:472px;width:76px;height:17px;background:#eeeeee"></div>
<div class="g" style="left:669px;top:472px;width:71px;text-align:right;color:#000">74,90</div>
<div class="g" style="left:749px;top:472px;width:71px;text-align:right;color:#000">93</div>
<div class="a" style="left:247px;top:501px;width:600px;height:81px;background:#f7f7f7;border-left:1px solid #d0d0d0"></div>
<div class="a" style="left:308px;top:500px;width:95px;height:30px;background:#efefef;border:1px solid #d0d0d0"></div>
<div class="a" style="left:248px;top:501px;width:61px;height:30px;background:#f7f7f7;border-right:1px solid #c4c4c4;border-bottom:1px solid #b8b8b8"></div>
<svg class="a" style="left:256px;top:508px" width="16" height="14" viewBox="0 0 16 14"><rect x="0.5" y="0.5" width="15" height="13" fill="#a8b8c6" stroke="#6f8394"/><rect x="0" y="0" width="16" height="1.6" fill="#6f8394"/><g fill="#fff"><rect x="1.30" y="2.00" width="1.9" height="1.9"/><rect x="4.05" y="2.00" width="1.9" height="1.9"/><rect x="6.80" y="2.00" width="1.9" height="1.9"/><rect x="9.55" y="2.00" width="1.9" height="1.9"/><rect x="12.30" y="2.00" width="1.9" height="1.9"/><rect x="1.30" y="4.90" width="1.9" height="1.9"/><rect x="4.05" y="4.90" width="1.9" height="1.9"/><rect x="6.80" y="4.90" width="1.9" height="1.9"/><rect x="9.55" y="4.90" width="1.9" height="1.9"/><rect x="12.30" y="4.90" width="1.9" height="1.9"/><rect x="1.30" y="7.80" width="1.9" height="1.9"/><rect x="4.05" y="7.80" width="1.9" height="1.9"/><rect x="6.80" y="7.80" width="1.9" height="1.9"/><rect x="9.55" y="7.80" width="1.9" height="1.9"/><rect x="12.30" y="7.80" width="1.9" height="1.9"/><rect x="1.30" y="10.70" width="1.9" height="1.9"/><rect x="4.05" y="10.70" width="1.9" height="1.9"/><rect x="6.80" y="10.70" width="1.9" height="1.9"/><rect x="9.55" y="10.70" width="1.9" height="1.9"/><rect x="12.30" y="10.70" width="1.9" height="1.9"/></g></svg>
<div class="t" style="left:277px;top:508px;font-size:11px;line-height:14px;color:#333">Línur</div>
<svg class="a" style="left:315px;top:506px" width="17" height="17" viewBox="0 0 17 17"><path d="M3 0.8 H11.5 L9.5 4 H6 Z" fill="#c8b020" stroke="#6a5a10" stroke-width="0.6"/><path d="M5.5 4 H10 C13.5 6 14 12 13 16 H3 C1.5 12 2 6 5.5 4 Z" fill="#c8b424" stroke="#6a5a10" stroke-width="0.6"/><path d="M6.5 6 Q11 5 10 8 Q6 9 7 11 Q10 12 9 13.5" fill="none" stroke="#3a3008" stroke-width="1.1"/><path d="M8.3 5 V15" stroke="#3a3008" stroke-width="0.8"/><ellipse cx="2.8" cy="15" rx="2.5" ry="1.6" fill="#d8c858" stroke="#6a5a10" stroke-width="0.5"/><rect x="10.5" y="10.5" width="5.5" height="5.8" fill="#e8eaec" stroke="#555" stroke-width="0.7"/></svg>
<div class="t" style="left:337px;top:508px;font-size:11px;line-height:14px;color:#333;letter-spacing:-0.3px">Greiðslulínur</div>
<div class="a" style="left:253px;top:535px;width:80px;height:22px;background:#fff;border:1px solid #a8a8a8"></div>
<div class="t" style="left:253px;top:539px;width:80px;text-align:center;font-size:11px;line-height:14px;color:#333"><span style="font-family:'Liberation Serif',serif;font-weight:bold;color:#111;font-size:11.5px">F1</span>&nbsp; Hjálp</div>
<div class="a" style="left:337px;top:535px;width:80px;height:22px;background:#fff;border:1px solid #a8a8a8"></div>
<div class="t" style="left:337px;top:539px;width:80px;text-align:center;font-size:11px;line-height:14px;color:#333"><span style="font-family:'Liberation Serif',serif;font-weight:bold;color:#111;font-size:11.5px">F5</span>&nbsp; Valmynd</div>
<div class="a" style="left:421px;top:535px;width:80px;height:22px;background:#fff;border:1px solid #a8a8a8"></div>
<div class="t" style="left:421px;top:539px;width:80px;text-align:center;font-size:11px;line-height:14px;color:#333"><span style="font-family:'Liberation Serif',serif;font-weight:bold;color:#111;font-size:11.5px">F7</span>&nbsp; Prenta</div>
<div class="a" style="left:505px;top:535px;width:80px;height:22px;background:#f5f5f5;border:1px solid #d8d8d8"></div>
<div class="t" style="left:505px;top:539px;width:80px;text-align:center;font-size:11px;line-height:14px;color:#999"><span style="font-family:'Liberation Serif',serif;font-weight:bold;color:#999;font-size:11.5px">INS</span>&nbsp; Ný</div>
<div class="a" style="left:590px;top:535px;width:80px;height:22px;background:#fff;border:1px solid #a8a8a8"></div>
<div class="t" style="left:590px;top:539px;width:80px;text-align:center;font-size:11px;line-height:14px;color:#333"><span style="font-family:'Liberation Serif',serif;font-weight:bold;color:#111;font-size:11.5px">ENT</span>&nbsp; Skoða</div>
<div class="a" style="left:674px;top:535px;width:80px;height:22px;background:#f5f5f5;border:1px solid #d8d8d8"></div>
<div class="t" style="left:674px;top:539px;width:80px;text-align:center;font-size:11px;line-height:14px;color:#999"><span style="font-family:'Liberation Serif',serif;font-weight:bold;color:#999;font-size:11.5px">DEL</span>&nbsp; Fella</div>
<div class="a" style="left:758px;top:535px;width:80px;height:22px;background:#fff;border:1px solid #a8a8a8"></div>
<div class="t" style="left:758px;top:539px;width:80px;text-align:center;font-size:11px;line-height:14px;color:#333"><span style="font-family:'Liberation Serif',serif;font-weight:bold;color:#111;font-size:11.5px">ESC</span>&nbsp; Hætta</div>
<div class="a" style="left:247px;top:560px;width:600px;height:1px;background:#dcdcdc"></div>
<div class="t" style="left:254px;top:563px;font-size:11px;line-height:14px;color:#333">{13196}</div>
<div class="a" style="left:314px;top:562px;width:70px;height:17px;background:#fff;border:1px solid #b4b4b4;border-right:2px solid #8c8c8c"></div>
<div class="t" style="left:316px;top:563px;font-size:11px;line-height:14px;color:#222">Telja færslur</div>
<div class="a" style="left:571px;top:562px;width:1px;height:17px;background:#b0b0b0"></div>
<div class="a" style="left:247px;top:579px;width:600px;height:1px;background:#c8c8c8"></div>
<div class="a" style="left:330px;top:164px;width:332px;height:332px;background:#fff;border:1px solid #c4c4c4"></div>
<div class="a" style="left:363px;top:257px;width:296px;height:1px;background:#d8d8d8"></div>
<div class="a" style="left:363px;top:329px;width:296px;height:1px;background:#d8d8d8"></div>
<div class="a" style="left:363px;top:379px;width:296px;height:1px;background:#d8d8d8"></div>
<div class="a" style="left:333px;top:355px;width:326px;height:21px;background:#d5d5d5"></div>
<div class="a" style="left:353px;top:359px;width:127px;height:12px;background:#d8d800"></div>
<div class="mi" style="left:361px;top:167px">Sýna dálka</div>
<div class="mi" style="left:530px;top:167px;width:107px;text-align:right">Ctrl+Alt+S</div>
<div class="mi" style="left:361px;top:189px">Fela dálka</div>
<div class="mi" style="left:530px;top:189px;width:107px;text-align:right">Ctrl+Alt+F</div>
<div class="mi" style="left:361px;top:211px">Dálkauppsetning</div>
<svg class="a" style="left:648px;top:218px" width="5" height="7"><path d="M0 0 L4.5 3.5 L0 7 Z" fill="#3a3a3a"/></svg>
<div class="mi" style="left:361px;top:233px">Dálkaflokkun</div>
<svg class="a" style="left:648px;top:240px" width="5" height="7"><path d="M0 0 L4.5 3.5 L0 7 Z" fill="#3a3a3a"/></svg>
<div class="mi" style="left:361px;top:261px">Samtalslína</div>
<div class="mi" style="left:530px;top:261px;width:107px;text-align:right">Ctrl+S</div>
<div class="mi" style="left:361px;top:283px">Filterval</div>
<div class="mi" style="left:361px;top:305px">Festa flokkunarlínu efst</div>
<div class="mi" style="left:361px;top:333px">Stækka línu ef texti dálks kemst ekki fyrir</div>
<div class="mi" style="left:530px;top:333px;width:107px;text-align:right">Ctrl+W</div>
<div class="mi" style="left:361px;top:355px">Senda valdar færslur...</div>
<svg class="a" style="left:648px;top:362px" width="5" height="7"><path d="M0 0 L4.5 3.5 L0 7 Z" fill="#3a3a3a"/></svg>
<div class="mi" style="left:361px;top:383px">Flytja út í..</div>
<svg class="a" style="left:648px;top:390px" width="5" height="7"><path d="M0 0 L4.5 3.5 L0 7 Z" fill="#3a3a3a"/></svg>
<div class="mi" style="left:361px;top:405px">Senda tölvupóst</div>
<svg class="a" style="left:648px;top:412px" width="5" height="7"><path d="M0 0 L4.5 3.5 L0 7 Z" fill="#3a3a3a"/></svg>
<div class="mi" style="left:361px;top:427px">Prenta</div>
<div class="mi" style="left:530px;top:427px;width:107px;text-align:right">Ctrl+P</div>
<div class="mi" style="left:361px;top:449px">Færsluupplýsingar</div>
<div class="mi" style="left:361px;top:472px">Töfluupplýsingar</div>
<svg class="a" style="left:339px;top:170px" width="16" height="16" viewBox="0 0 16 16"><path d="M5.5 0.5 H10.5 V5.5 H15.5 V10.5 H10.5 V15.5 H5.5 V10.5 H0.5 V5.5 H5.5 Z" fill="#3d7fc4" stroke="#1f4f86"/><path d="M6.5 6 H14.5 V9" stroke="#7fb3e6" fill="none"/></svg>
<svg class="a" style="left:339px;top:196px" width="16" height="7" viewBox="0 0 16 7"><rect x="0.5" y="0.5" width="15" height="6" rx="1" fill="#3d7fc4" stroke="#1f4f86"/><path d="M1.5 2 H14.5" stroke="#8abbe8"/></svg>
<svg class="a" style="left:339px;top:215px" width="16" height="14" viewBox="0 0 16 14"><rect x="0.5" y="0.5" width="15" height="13" fill="#a8b8c6" stroke="#6f8394"/><rect x="0" y="0" width="16" height="1.6" fill="#6f8394"/><g fill="#fff"><rect x="1.30" y="2.00" width="1.9" height="1.9"/><rect x="4.05" y="2.00" width="1.9" height="1.9"/><rect x="6.80" y="2.00" width="1.9" height="1.9"/><rect x="9.55" y="2.00" width="1.9" height="1.9"/><rect x="12.30" y="2.00" width="1.9" height="1.9"/><rect x="1.30" y="4.90" width="1.9" height="1.9"/><rect x="4.05" y="4.90" width="1.9" height="1.9"/><rect x="6.80" y="4.90" width="1.9" height="1.9"/><rect x="9.55" y="4.90" width="1.9" height="1.9"/><rect x="12.30" y="4.90" width="1.9" height="1.9"/><rect x="1.30" y="7.80" width="1.9" height="1.9"/><rect x="4.05" y="7.80" width="1.9" height="1.9"/><rect x="6.80" y="7.80" width="1.9" height="1.9"/><rect x="9.55" y="7.80" width="1.9" height="1.9"/><rect x="12.30" y="7.80" width="1.9" height="1.9"/><rect x="1.30" y="10.70" width="1.9" height="1.9"/><rect x="4.05" y="10.70" width="1.9" height="1.9"/><rect x="6.80" y="10.70" width="1.9" height="1.9"/><rect x="9.55" y="10.70" width="1.9" height="1.9"/><rect x="12.30" y="10.70" width="1.9" height="1.9"/></g></svg>
<svg class="a" style="left:339px;top:237px" width="16" height="14" viewBox="0 0 16 14"><rect x="0.5" y="0.5" width="15" height="13" fill="#eef2f5" stroke="#6f8294"/><path d="M0.5 6.5 H15.5" stroke="#6f8294"/><rect x="12" y="1" width="3" height="1.5" fill="#e04030"/></svg>
<svg class="a" style="left:338px;top:385px" width="18" height="17" viewBox="0 0 18 17"><path d="M5 3 L7 1 H17 V14 L15 16 H5 Z" fill="#6a7888"/><path d="M7 1 H17 L15 3 H5 Z" fill="#c8d0d8"/><rect x="5" y="3" width="10" height="13" fill="#4a86c4" stroke="#3a5a7a" stroke-width="0.7"/><path d="M15 3 L17 1 V14 L15 16 Z" fill="#8a96a4"/><rect x="6" y="4" width="8" height="3" fill="#a8d0f0"/><path d="M1 12 L4.5 8 L5.2 10 Q8 8 10.5 6.5 L12 9 Q9 11 6.5 12.5 L7.5 14.5 Z" fill="#d0182a" stroke="#7a0a10" stroke-width="0.6"/></svg>
<svg class="a" style="left:338px;top:407px" width="18" height="17" viewBox="0 0 18 17"><circle cx="11" cy="7.3" r="6.2" fill="#2f72c8" stroke="#22508a" stroke-width="0.5"/><path d="M6.5 3 Q9 1 12.5 1.5 Q15 3 12 5 Q10 6 12 8 Q11 10 9 9 Q7 7 6.5 3 Z" fill="#4aa830"/><path d="M14 5 Q16.5 6 17 8.5 Q15.5 10 14.5 8 Z" fill="#4aa830"/><path d="M1 7.5 H13 V16 H1 Z" fill="#e4e4e4" stroke="#7a7a7a" stroke-width="0.8"/><path d="M1 7.5 L7 12.5 L13 7.5 M1 16 L5.5 11.5 M13 16 L8.5 11.5" fill="none" stroke="#9a9a9a" stroke-width="0.7"/></svg>
<svg class="a" style="left:338px;top:430px" width="18" height="16" viewBox="0 0 18 16"><path d="M10.5 1 L16.5 0.5 L16.5 5.5 L10.5 6 Z" fill="#d8d8d8" stroke="#8a8a8a" stroke-width="0.7"/><path d="M2 6.5 L11 4 L17 6 V10.5 L8 13.5 L2 11 Z" fill="#ececec" stroke="#6a6a6a" stroke-width="0.7"/><path d="M2 6.5 L11 4 L17 6 L8 8.8 Z" fill="#4a8ed8" stroke="#3a6aa0" stroke-width="0.6"/><path d="M8 8.8 V13.5" stroke="#9a9a9a" stroke-width="0.6"/><path d="M0.8 12.5 L6.5 10 L10 12 L4.2 15 Z" fill="#fff" stroke="#7a7a7a" stroke-width="0.7"/></svg>
<svg class="a" style="left:338px;top:451px" width="18" height="17" viewBox="0 0 18 17"><circle cx="11.2" cy="6.2" r="5" fill="#eaf4fc" stroke="#3a4a5a" stroke-width="1.3"/><path d="M10 3.5 Q11 2.5 13 3" stroke="#fff" stroke-width="1" fill="none"/><path d="M7.6 9.8 L1.8 15.5" stroke="#a87428" stroke-width="2.6" stroke-linecap="round"/></svg>
<svg class="a" style="left:339px;top:474px" width="16" height="16" viewBox="0 0 16 16"><path d="M1 2.5 Q6 0 11.5 2.5 V14 Q6 16.5 1 14 Z" fill="#b8c6d4" stroke="#5a6a7a" stroke-width="0.9"/><path d="M2.5 5 H5 M2.5 7.5 H5 M2.5 10 H5" stroke="#fff" stroke-width="1"/><circle cx="8.3" cy="9" r="3.4" fill="#eaf4fb" stroke="#2a3a4a" stroke-width="1.2"/><path d="M10.6 11.4 L14.3 15" stroke="#a06a20" stroke-width="1.9"/></svg>
<div class="a" style="left:656px;top:352px;width:140px;height:50px;background:#fff;border:1px solid #c4c4c4"></div>
<div class="a" style="left:659px;top:377px;width:134px;height:22px;background:#d5d5d5"></div>
<div class="a" style="left:673px;top:381px;width:91px;height:12px;background:#d8d800"></div>
<div class="mi" style="left:687px;top:355px">Í prentun</div>
<div class="mi" style="left:687px;top:378px">Í tölvupósti</div>
</div></body></html>
